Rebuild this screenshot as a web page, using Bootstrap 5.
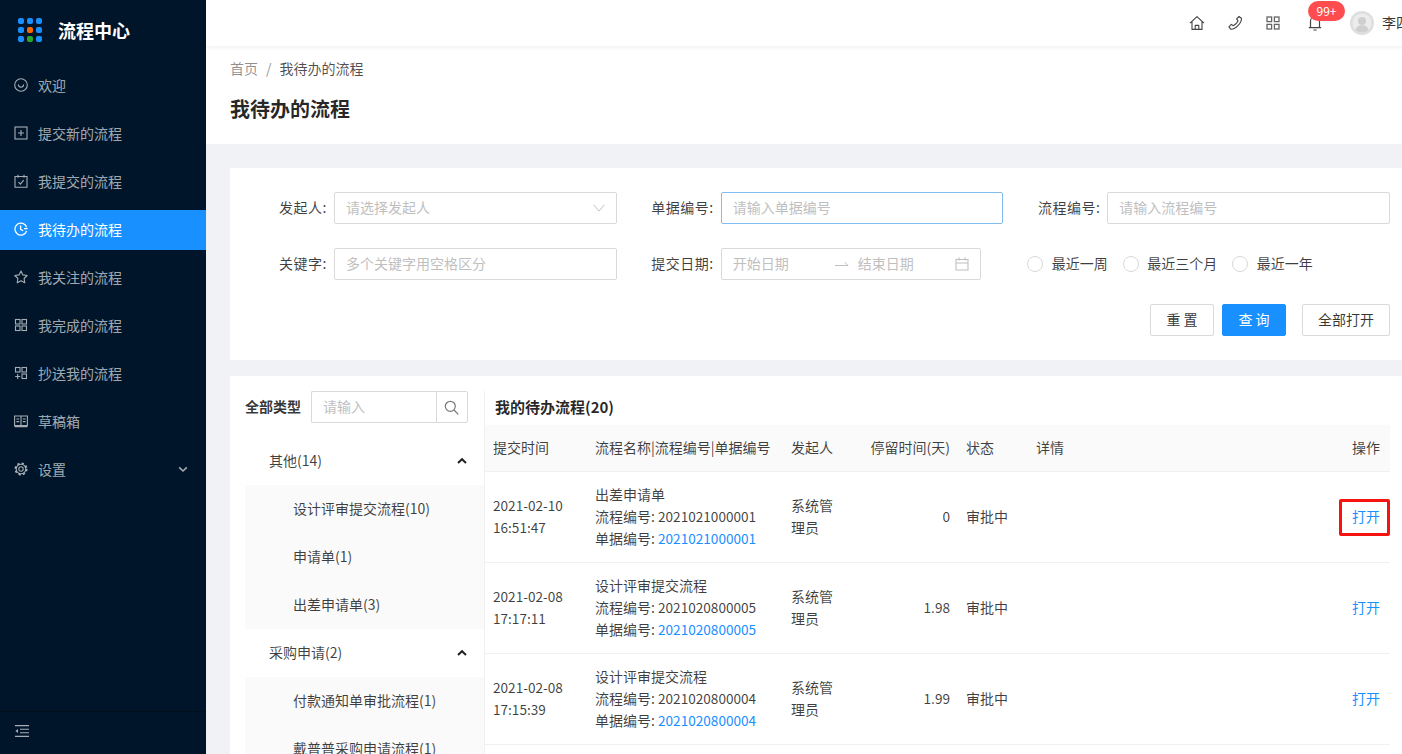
<!DOCTYPE html>
<html lang="zh-CN">
<head>
  <meta charset="UTF-8">
  <meta name="viewport" content="width=device-width, initial-scale=1">
  <title>流程中心</title>
  <link href="https://cdn.jsdelivr.net/npm/bootstrap@5.3.2/dist/css/bootstrap.min.css" rel="stylesheet">
  <style>
    html, body { height: 754px; overflow: hidden; }
    body {
      font-family: "Noto Sans CJK SC", sans-serif;
      font-size: 14px;
      color: rgba(0,0,0,.8);
      background: #f0f2f5;
    }
    svg { display: block; flex: none; }
    .num { font-size: 13.6px; }

    /* sidebar */
    .side-bar { flex: 0 0 206px; width: 206px; height: 754px; background: #001529; color: rgba(255,255,255,.65); }
    .side-logo { height: 66px; padding: 18px 0 0 18px; }
    .logo-dots { display: grid; grid-template-columns: repeat(3, 6px); gap: 3px; height: 24px; }
    .logo-dots i { display: block; width: 6px; height: 6px; border-radius: 2px; background: #1890ff; }
    .logo-dots .dot-o { background: #f56a00; }
    .logo-dots .dot-g { background: #2ba52b; }
    .side-title { font-size: 18px; font-weight: 700; color: #fff; margin: -1px 0 0 16px; line-height: 26px; height: 26px; }
    .side-link { height: 40px; margin-bottom: 8px; padding: 0 0 2px 14px; color: rgba(255,255,255,.65); gap: 10px; }
    .side-link:hover { color: #fff; }
    .side-link.active { background: #1890ff; color: #fff; }
    .side-caret { margin-left: auto; margin-right: 18px; }
    .side-foot { height: 43px; padding: 0 0 4px 15px; border-top: 1px solid rgba(0,0,0,.25); }

    /* page */
    .main-area { flex: 0 0 1232px; width: 1232px; }
    .top-bar { height: 46px; background: #fff; box-shadow: 0 1px 4px rgba(0,21,41,.08); padding-right: 28px; position: relative; }
    .top-icon { color: #444; }
    .top-phone { margin-left: 22px; }
    .top-grid { margin-left: 23px; }
    .top-bell { position: relative; margin-left: 28px; margin-right: 28px; }
    .bell-badge {
      position: absolute; left: 0; top: -14px; width: 37px; height: 20px; border-radius: 10px;
      background: #ff4d4f; color: #fff; font-size: 12px; line-height: 20px; text-align: center;
    }
    .user-name { margin-left: 8px; padding-bottom: 2px; color: rgba(0,0,0,.8); }
    .page-head { height: 98px; background: #fff; padding: 12px 24px 0; }
    .page-head .breadcrumb { font-size: 14px; margin-bottom: 17px; line-height: 20px; --bs-breadcrumb-divider-color: #999; --bs-breadcrumb-item-active-color: rgba(0,0,0,.7); --bs-breadcrumb-item-padding-x: 8px; }
    .page-head .breadcrumb a { color: rgba(0,0,0,.45); text-decoration: none; }
    .page-title { font-size: 20px; font-weight: 700; line-height: 28px; color: rgba(0,0,0,.85); margin: 0; }

    /* filter form */
    .filter-box { background: #fff; margin: 24px 24px 16px; height: 192px; padding: 24px 24px 0 0; }
    .filter-grid { display: grid; grid-template-columns: repeat(3, 1fr); row-gap: 24px; }
    .f-label { flex: 0 0 104px; width: 104px; padding-right: 7px; text-align: right; line-height: 30px; letter-spacing: .5px; color: rgba(0,0,0,.75); }
    .filter-box .form-control, .search-group .form-control {
      height: 32px; min-height: 32px; padding: 0 11px 2px; font-size: 14px; border: 1px solid #d9d9d9; border-radius: 2px; box-shadow: none; color: #bfbfbf;
    }
    .filter-box .form-control svg { margin-top: 2px; }
    .form-control::placeholder { color: #bfbfbf; opacity: 1; }
    .filter-box .form-control.input-on { border-color: #7fbcf0; }
    .date-range { width: 260px; flex: none !important; }
    .date-end { margin-left: 9px; }
    .date-arrow { margin-left: 46px; }
    .radio-line { padding-left: 24px; }
    .radio-dot { width: 16px; height: 16px; border: 1px solid #d9d9d9; border-radius: 50%; background: #fff; margin-right: 8.5px; }
    .radio-text { margin-right: 15px; padding-bottom: 2px; color: rgba(0,0,0,.75); }
    .btn-line { margin-top: 24px; gap: 8px; }
    .btn-act { height: 32px; padding: 0 0 2px; font-size: 14px; line-height: 28px; border-radius: 2px; border: 1px solid #d9d9d9; color: rgba(0,0,0,.8); background: #fff; }
    .btn-short { width: 64px; }
    .btn-long { width: 88px; margin-left: 8px; }
    .btn-main { background: #1890ff; border-color: #1890ff; color: #fff; }

    /* lower panel */
    .list-box { background: #fff; margin: 0 24px; padding: 15px 24px 0 15px; height: 500px; }
    .tree-col { flex: 0 0 240px; width: 240px; border-right: 1px solid #f0f0f0; }
    .tree-head { padding-right: 16px; margin-bottom: 14px; }
    .tree-head b { font-weight: 700; margin-right: 10px; padding-bottom: 2px; }
    .search-group { width: 157px; }
    .search-group .form-control { border-right: 0; }
    .search-group .btn { width: 32px; height: 32px; padding: 0 0 0 7px; border: 1px solid #d9d9d9; border-radius: 0 2px 2px 0; color: #777; }
    .tree-group, .tree-item { height: 48px; border: 0; border-radius: 0; background: transparent; color: rgba(0,0,0,.75); padding: 0 0 2px; }
    .tree-group { padding: 0 17px 2px 24px; }
    .tree-group svg { margin-top: 2px; }
    .tree-item { background: #fafafa; padding-left: 48px; }
    .table-col { flex: 1 1 auto; min-width: 0; }
    .table-title { font-size: 15px; font-weight: 700; line-height: 32px; padding: 0 0 2px 10px; color: rgba(0,0,0,.85); }
    .flow-table { table-layout: fixed; width: 100%; margin: 0; --bs-table-color: rgba(0,0,0,.75); --bs-table-border-color: #f0f0f0; }
    .flow-table th, .flow-table td { padding: 0 8px 2px; vertical-align: middle; line-height: 22px; }
    .flow-table thead th { height: 46px; background: #fafafa; font-weight: 400; color: rgba(0,0,0,.75); }
    .flow-table tbody td { height: 91px; }
    .col-time { width: 102px; }
    .col-name { width: 196px; }
    .col-user { width: 70px; }
    .col-stay { width: 105px; }
    .col-state { width: 70px; }
    .col-op { width: 90px; }
    .flow-table .cell-op { padding-right: 10px; }
    .flow-table .cell-mark { padding-top: 2px; padding-bottom: 0; }
    .flow-table a { color: #1890ff; text-decoration: none; }
    .mark-box { display: block; width: fit-content; margin: 0 -10px 0 auto; padding: 3px 7px 6px 10px; border: 3px solid #f5140f; border-radius: 2px; }
  </style>
</head>
<body class="d-flex">
  <!-- sidebar -->
  <aside class="side-bar d-flex flex-column">
    <div class="side-logo d-flex">
      <div class="logo-dots">
        <i></i><i></i><i></i>
        <i></i><i class="dot-o"></i><i></i>
        <i></i><i class="dot-g"></i><i></i>
      </div>
      <span class="side-title">流程中心</span>
    </div>
    <nav class="nav flex-column flex-grow-1 flex-nowrap">
      <a class="nav-link side-link d-flex align-items-center" href="#">
        <svg width="14" height="14" viewBox="0 0 14 14" fill="none" stroke="currentColor" stroke-width="1.1"><circle cx="7" cy="7" r="6.3"/><path d="M4.4 6.6a2.6 2.6 0 0 0 5.2 0"/></svg>欢迎</a>
      <a class="nav-link side-link d-flex align-items-center" href="#">
        <svg width="14" height="14" viewBox="0 0 14 14" fill="none" stroke="currentColor" stroke-width="1.1"><rect x="1" y="1" width="12" height="12"/><path d="M7 4v6M4 7h6"/></svg>提交新的流程</a>
      <a class="nav-link side-link d-flex align-items-center" href="#">
        <svg width="14" height="14" viewBox="0 0 14 14" fill="none" stroke="currentColor" stroke-width="1.1"><path d="M1 2.500h12v10.700H1zM4 .8v3M10 .8v3"/><path d="M4.500 8.200l1.900 1.900 3.300-4"/></svg>我提交的流程</a>
      <a class="nav-link side-link active d-flex align-items-center" href="#">
        <svg width="14" height="14" viewBox="0 0 14 14" fill="none" stroke="currentColor" stroke-width="1.3"><path d="M12.600 5.200A6 6 0 1 0 12.600 9"/><path d="M6.600 3.600v3.700l2.500 1.500M10 6.600h3.600"/></svg>我待办的流程</a>
      <a class="nav-link side-link d-flex align-items-center" href="#">
        <svg width="14" height="14" viewBox="0 0 14 14" fill="none" stroke="currentColor" stroke-width="1.1" stroke-linejoin="round"><path d="M7 1l1.900 3.900 4.300.6-3.100 3 .7 4.300L7 10.800l-3.800 2 .7-4.300-3.100-3 4.300-.6z"/></svg>我关注的流程</a>
      <a class="nav-link side-link d-flex align-items-center" href="#">
        <svg width="14" height="14" viewBox="0 0 14 14" fill="none" stroke="currentColor" stroke-width="1.1"><rect x="1.500" y="1.500" width="4.500" height="4.500"/><rect x="8" y="1.500" width="4.500" height="4.500"/><rect x="1.500" y="8" width="4.500" height="4.500"/><rect x="8" y="8" width="4.500" height="4.500"/></svg>我完成的流程</a>
      <a class="nav-link side-link d-flex align-items-center" href="#">
        <svg width="14" height="14" viewBox="0 0 14 14" fill="none" stroke="currentColor" stroke-width="1.1"><rect x="1.500" y="1.500" width="4.500" height="4.500"/><rect x="8" y="1.500" width="4.500" height="4.500"/><rect x="8" y="8" width="4.500" height="4.500"/><path d="M3.700 8v5M1.200 10.500h5"/></svg>抄送我的流程</a>
      <a class="nav-link side-link d-flex align-items-center" href="#">
        <svg width="14" height="14" viewBox="0 0 14 14" fill="none" stroke="currentColor" stroke-width="1.1"><path d="M.6 2h12.800v9.600H.6zM7 2v9.600M.6 12.600h12.800M2.400 5h2.800M2.400 7.600h2.800M8.800 5h2.800M8.800 7.600h2.800"/></svg>草稿箱</a>
      <a class="nav-link side-link d-flex align-items-center" href="#">
        <svg width="14" height="14" viewBox="0 0 14 14" fill="none" stroke="currentColor"><circle cx="7" cy="7" r="2.200" stroke-width="1.1"/><circle cx="7" cy="7" r="4.800" stroke-width="1.1"/><circle cx="7" cy="7" r="5.800" stroke-width="1.500" stroke-dasharray="2.300 2.250"/></svg>设置
        <svg class="side-caret" width="10" height="10" viewBox="0 0 10 10" fill="none" stroke="currentColor" stroke-width="1.6"><path d="M1.200 3.400L5 7l3.800-3.600"/></svg>
      </a>
    </nav>
    <div class="side-foot d-flex align-items-center">
      <svg width="14" height="12" viewBox="0 0 14 12" fill="none" stroke="currentColor" stroke-width="1.1"><path d="M0 .6h14M5 4.200h9M5 7.800h9M0 11.400h14"/><path d="M3 4L.4 6 3 8z" fill="currentColor" stroke="none"/></svg>
    </div>
  </aside>

  <div class="main-area">
    <!-- top bar -->
    <header class="top-bar d-flex align-items-center justify-content-end">
      <svg class="top-icon" width="16" height="16" viewBox="0 0 16 16" fill="none" stroke="currentColor" stroke-width="1.1" stroke-linejoin="round"><path d="M1 8.200L8 1.600l7 6.600M3 6.600v7.800h10V6.600M6.200 14.400v-4h3.600v4"/></svg>
      <svg class="top-icon top-phone" width="16" height="16" viewBox="0 0 16 16" fill="none" stroke="currentColor" stroke-width="1.1" stroke-linejoin="round"><path d="M12 1.500L9.600 3.900l1.400 2C10.200 7.600 8 9.800 6.300 10.800L4.300 9.400 1.900 11.800l1.800 2.400C7.800 15 15.200 7.800 14.400 3.200z"/></svg>
      <svg class="top-icon top-grid" width="14" height="14" viewBox="0 0 14 14" fill="none" stroke="#666" stroke-width="1.3"><rect x="1" y="1" width="4.600" height="4.600"/><rect x="8.400" y="1" width="4.600" height="4.600"/><rect x="1" y="8.400" width="4.600" height="4.600"/><rect x="8.400" y="8.400" width="4.600" height="4.600"/></svg>
      <div class="top-bell">
        <svg class="top-icon" width="14" height="16" viewBox="0 0 14 16" fill="none" stroke="currentColor" stroke-width="1.2"><path d="M2.500 12.600V6a4.500 4.500 0 0 1 9 0v6.600M.8 12.600h12.400M5.400 15h3.200"/></svg>
        <span class="bell-badge">99+</span>
      </div>
      <svg width="24" height="24" viewBox="0 0 24 24"><circle cx="12" cy="12" r="12" fill="#dedede"/><circle cx="12" cy="12" r="9.500" fill="#ececec"/><circle cx="12" cy="10" r="4" fill="#cfcfcf"/><path d="M5.500 19c1-3.600 3.400-4.800 6.500-4.800s5.500 1.200 6.500 4.800a9.500 9.500 0 0 1-13 0z" fill="#cfcfcf"/></svg>
      <span class="user-name">李四</span>
    </header>

    <div class="page-head">
      <nav>
        <ol class="breadcrumb">
          <li class="breadcrumb-item"><a href="#">首页</a></li>
          <li class="breadcrumb-item active">我待办的流程</li>
        </ol>
      </nav>
      <h1 class="page-title">我待办的流程</h1>
    </div>

    <!-- filter form -->
    <section class="filter-box">
      <div class="filter-grid">
        <div class="d-flex">
          <label class="f-label">发起人:</label>
          <div class="form-control d-flex align-items-center justify-content-between">请选择发起人
            <svg width="12" height="8" viewBox="0 0 12 8" fill="none" stroke="#bfbfbf" stroke-width="1"><path d="M.6.8L6 7l5.400-6.200"/></svg>
          </div>
        </div>
        <div class="d-flex">
          <label class="f-label">单据编号:</label>
          <input class="form-control input-on" placeholder="请输入单据编号">
        </div>
        <div class="d-flex">
          <label class="f-label">流程编号:</label>
          <input class="form-control" placeholder="请输入流程编号">
        </div>
        <div class="d-flex">
          <label class="f-label">关键字:</label>
          <input class="form-control" placeholder="多个关键字用空格区分">
        </div>
        <div class="d-flex">
          <label class="f-label">提交日期:</label>
          <div class="form-control date-range d-flex align-items-center">开始日期
            <svg class="date-arrow" width="14" height="8" viewBox="0 0 14 8" fill="none" stroke="#bfbfbf" stroke-width="1"><path d="M0 5.500h13L9.500 2"/></svg>
            <span class="date-end">结束日期</span>
            <svg class="ms-auto" width="14" height="14" viewBox="0 0 14 14" fill="none" stroke="#bfbfbf" stroke-width="1.1"><path d="M1 2.500h12v10.500H1zM1 6h12M4 .6v3M10 .6v3"/></svg>
          </div>
        </div>
        <div class="radio-line d-flex align-items-center">
          <span class="radio-dot"></span><span class="radio-text">最近一周</span>
          <span class="radio-dot"></span><span class="radio-text">最近三个月</span>
          <span class="radio-dot"></span><span class="radio-text">最近一年</span>
        </div>
      </div>
      <div class="btn-line d-flex justify-content-end">
        <button class="btn btn-act btn-short">重 置</button>
        <button class="btn btn-act btn-short btn-main">查 询</button>
        <button class="btn btn-act btn-long">全部打开</button>
      </div>
    </section>

    <!-- types + table -->
    <section class="list-box d-flex">
      <div class="tree-col">
        <div class="tree-head d-flex align-items-center">
          <b>全部类型</b>
          <div class="input-group search-group flex-nowrap">
            <input class="form-control" placeholder="请输入">
            <button class="btn" type="button">
              <svg width="15" height="15" viewBox="0 0 15 15" fill="none" stroke="currentColor" stroke-width="1.2"><circle cx="6.300" cy="6.300" r="5"/><path d="M10 10l4.300 4.300"/></svg>
            </button>
          </div>
        </div>
        <div class="list-group list-group-flush">
          <div class="list-group-item tree-group d-flex align-items-center justify-content-between">其他(14)
            <svg width="10" height="8" viewBox="0 0 10 8" fill="none" stroke="#222" stroke-width="2"><path d="M1 6l4-3.800L9 6"/></svg>
          </div>
          <div class="list-group-item tree-item d-flex align-items-center">设计评审提交流程(10)</div>
          <div class="list-group-item tree-item d-flex align-items-center">申请单(1)</div>
          <div class="list-group-item tree-item d-flex align-items-center">出差申请单(3)</div>
          <div class="list-group-item tree-group d-flex align-items-center justify-content-between">采购申请(2)
            <svg width="10" height="8" viewBox="0 0 10 8" fill="none" stroke="#222" stroke-width="2"><path d="M1 6l4-3.800L9 6"/></svg>
          </div>
          <div class="list-group-item tree-item d-flex align-items-center">付款通知单审批流程(1)</div>
          <div class="list-group-item tree-item d-flex align-items-center">戴普普采购申请流程(1)</div>
        </div>
      </div>
      <div class="table-col">
        <div class="table-title">我的待办流程(20)</div>
        <table class="table flow-table">
          <colgroup>
            <col class="col-time"><col class="col-name"><col class="col-user"><col class="col-stay"><col class="col-state"><col><col class="col-op">
          </colgroup>
          <thead>
            <tr>
              <th>提交时间</th>
              <th>流程名称|流程编号|单据编号</th>
              <th>发起人</th>
              <th class="text-end">停留时间(天)</th>
              <th>状态</th>
              <th>详情</th>
              <th class="text-end cell-op">操作</th>
            </tr>
          </thead>
          <tbody>
            <tr>
              <td class="num">2021-02-10<br>16:51:47</td>
              <td>出差申请单<br>流程编号: <span class="num">2021021000001</span><br>单据编号: <a class="num" href="#">2021021000001</a></td>
              <td>系统管理员</td>
              <td class="text-end num">0</td>
              <td>审批中</td>
              <td></td>
              <td class="text-end cell-op cell-mark"><a class="mark-box" href="#">打开</a></td>
            </tr>
            <tr>
              <td class="num">2021-02-08<br>17:17:11</td>
              <td>设计评审提交流程<br>流程编号: <span class="num">2021020800005</span><br>单据编号: <a class="num" href="#">2021020800005</a></td>
              <td>系统管理员</td>
              <td class="text-end num">1.98</td>
              <td>审批中</td>
              <td></td>
              <td class="text-end cell-op"><a href="#">打开</a></td>
            </tr>
            <tr>
              <td class="num">2021-02-08<br>17:15:39</td>
              <td>设计评审提交流程<br>流程编号: <span class="num">2021020800004</span><br>单据编号: <a class="num" href="#">2021020800004</a></td>
              <td>系统管理员</td>
              <td class="text-end num">1.99</td>
              <td>审批中</td>
              <td></td>
              <td class="text-end cell-op"><a href="#">打开</a></td>
            </tr>
          </tbody>
        </table>
      </div>
    </section>
  </div>
</body>
</html>
